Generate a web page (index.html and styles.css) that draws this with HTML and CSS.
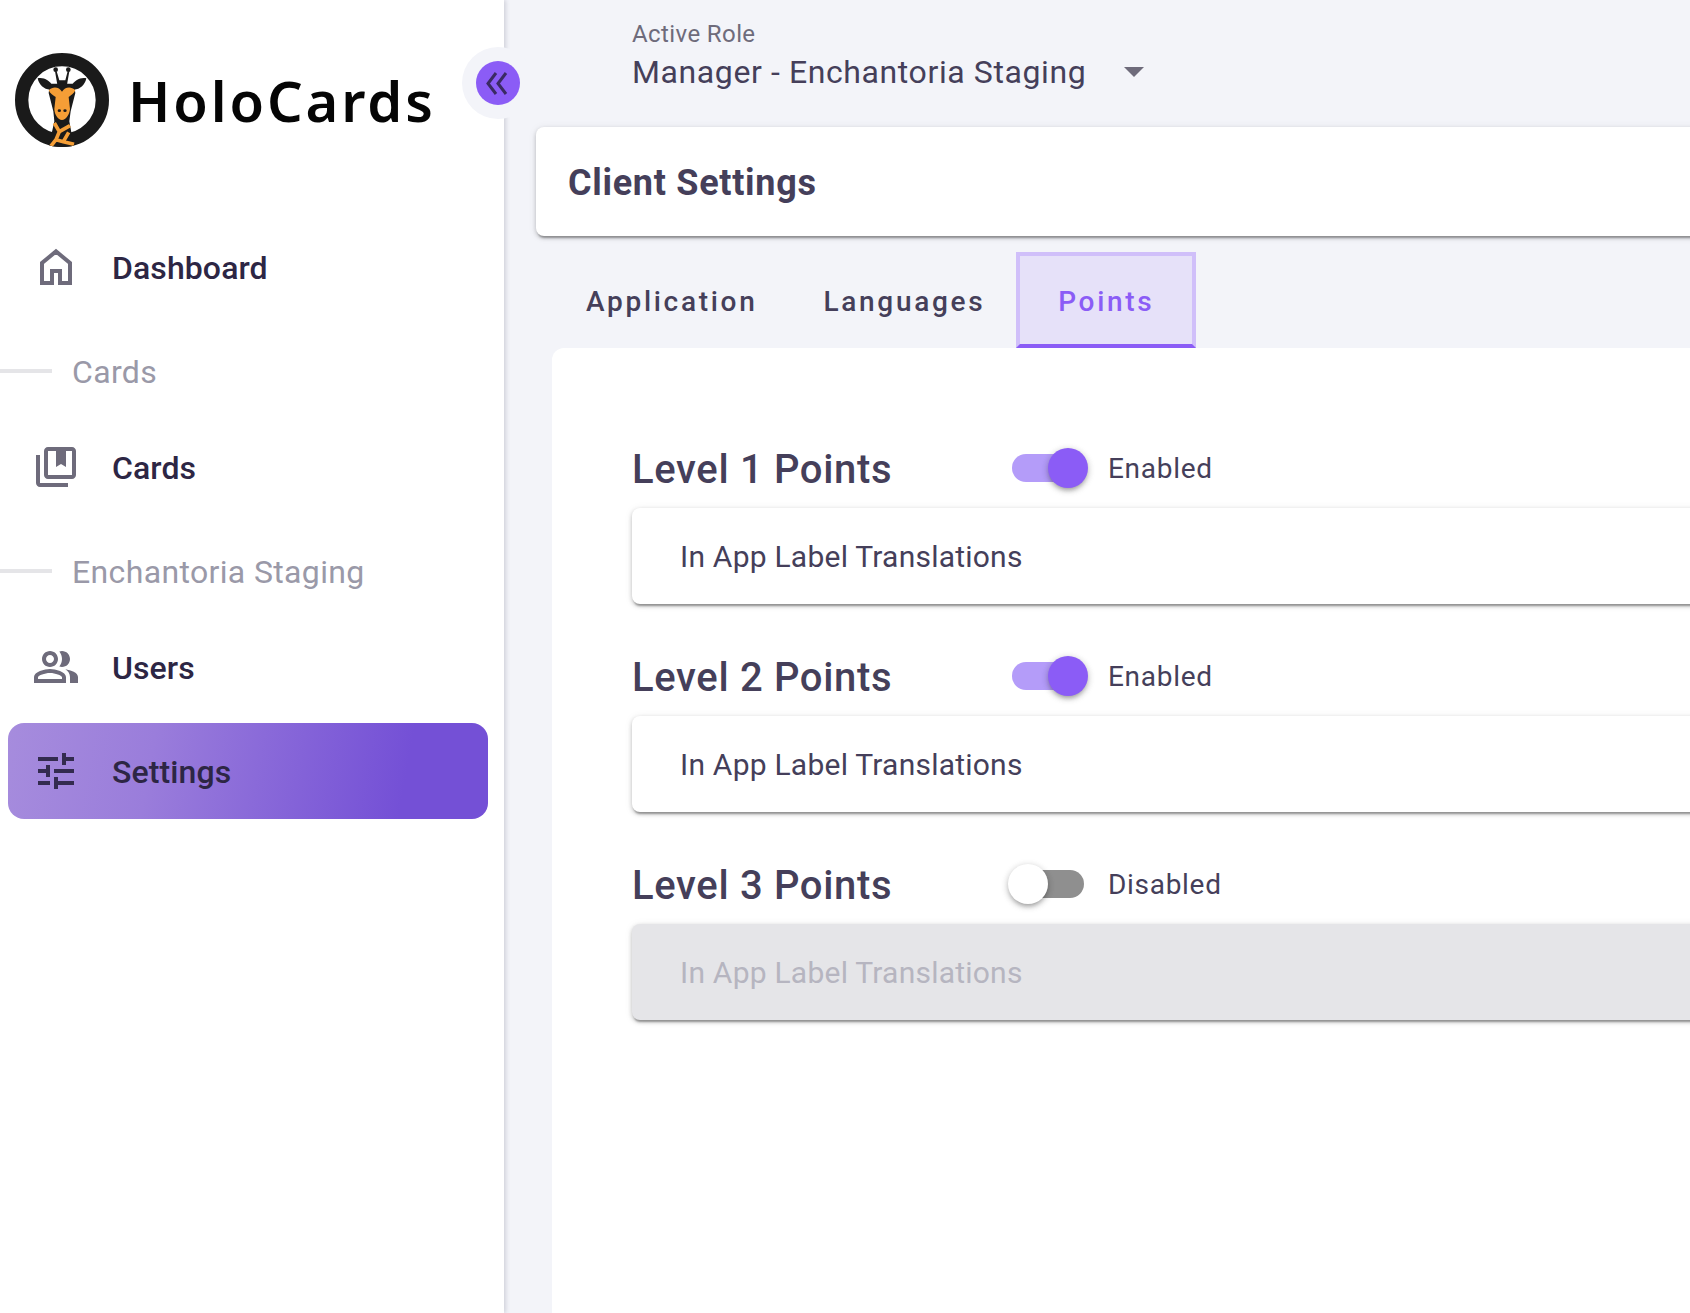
FILE: index.html
```html
<!DOCTYPE html>
<html lang="en">
<head>
<meta charset="utf-8">
<title>HoloCards - Client Settings</title>
<link rel="stylesheet" href="styles.css">
</head>
<body>
<div class="app">
  <aside class="sidebar">
    <div class="brand">
      <svg class="logo" viewBox="45 40 282 282">
        <defs><clipPath id="logoClip"><circle cx="186" cy="181" r="141"/></clipPath></defs>
        <circle cx="186" cy="181" r="121" fill="#fff" stroke="#1a1a1a" stroke-width="40"/>
        <g clip-path="url(#logoClip)">
          <path d="M172 135 L165 95 H170 L178 122 H196 L203 95 H208 L201 135 Z" fill="#1a1a1a"/>
          <circle cx="167" cy="90" r="7" fill="#1a1a1a"/>
          <circle cx="205" cy="90" r="7" fill="#1a1a1a"/>
          <path d="M113 116 C130 112 150 122 158 140 L150 150 C132 150 116 134 113 116 Z" fill="#1a1a1a"/>
          <path d="M259 116 C242 112 222 122 214 140 L222 150 C240 150 256 134 259 116 Z" fill="#1a1a1a"/>
          <path d="M150 132 H222 L226 160 L212 215 L208 245 L222 322 H146 L163 245 L160 215 L146 160 Z" fill="#1a1a1a"/>
          <path d="M146 152 C160 138 178 143 186 156 C194 143 212 138 226 152 C222 162 212 168 206 172 L210 208 C208 226 198 240 186 241 C174 240 164 226 163 208 L167 172 C160 168 150 162 146 152 Z" fill="#f59e36"/>
          <ellipse cx="178" cy="213" rx="5" ry="4" fill="#1a1a1a"/>
          <ellipse cx="195" cy="213" rx="5" ry="4" fill="#1a1a1a"/>
          <path d="M163 250 L178 276 L168 300 L152 320 M178 276 L210 258 M168 300 L190 306 L222 314 M190 306 L206 278" fill="none" stroke="#f59e36" stroke-width="11"/>
        </g>
      </svg>
      <span class="brand-name">HoloCards</span>
    </div>
    <nav class="nav">
      <a class="nav-item">
        <svg class="nav-icon" viewBox="0 0 24 24"><path d="M10 20H5V10L12 4.2 19 10V20H14V14H10Z" fill="none" stroke="currentColor" stroke-width="2"/></svg>
        <span>Dashboard</span>
      </a>
      <div class="nav-section"><span>Cards</span></div>
      <a class="nav-item">
        <svg class="nav-icon" viewBox="0 0 24 24"><path fill="currentColor" d="M4 6H2v14c0 1.1.9 2 2 2h14v-2H4V6zM20 2H8c-1.1 0-2 .9-2 2v12c0 1.1.9 2 2 2h12c1.1 0 2-.9 2-2V4c0-1.1-.9-2-2-2zm0 14H8V4h4v8l2.5-1.5L17 12V4h3v12z"/></svg>
        <span>Cards</span>
      </a>
      <div class="nav-section"><span>Enchantoria Staging</span></div>
      <a class="nav-item">
        <svg class="nav-icon" viewBox="0 0 24 24"><path fill="currentColor" d="M16.67 13.13C18.04 14.06 19 15.32 19 17v3h4v-3c0-2.18-3.57-3.47-6.33-3.87zM15 12c2.21 0 4-1.79 4-4s-1.79-4-4-4c-.47 0-.91.1-1.33.24C14.5 5.27 15 6.58 15 8s-.5 2.73-1.33 3.76c.42.14.86.24 1.33.24zM9 12c2.21 0 4-1.79 4-4s-1.79-4-4-4-4 1.79-4 4 1.79 4 4 4zm0-6c1.1 0 2 .9 2 2s-.9 2-2 2-2-.9-2-2 .9-2 2-2zM9 13c-2.67 0-8 1.34-8 4v3h16v-3c0-2.66-5.33-4-8-4zm6 5H3v-.99C3.2 16.29 6.3 15 9 15s5.8 1.29 6 2z"/></svg>
        <span>Users</span>
      </a>
      <a class="nav-item active">
        <svg class="nav-icon" viewBox="0 0 24 24"><path fill="currentColor" d="M3 17v2h6v-2H3zM3 5v2h10V5H3zm10 16v-2h8v-2h-8v-2h-2v6h2zM7 9v2H3v2h4v2h2V9H7zm14 4v-2H11v2h10zm-6-4h2V7h4V5h-4V3h-2v6z"/></svg>
        <span>Settings</span>
      </a>
    </nav>
    <div class="collapse-halo">
      <button class="collapse-btn" type="button" aria-label="Collapse">
        <svg viewBox="0 0 44 44" width="44" height="44"><path d="M20 12 L12 22.5 L20 33 M30 12 L22 22.5 L30 33" fill="none" stroke="#3a2a63" stroke-width="3"/></svg>
      </button>
    </div>
  </aside>
  <main class="main">
    <div class="role">
      <div class="role-label">Active Role</div>
      <div class="role-select">
        <span>Manager - Enchantoria Staging</span>
        <i class="caret"></i>
      </div>
    </div>
    <header class="title-card"><h1>Client Settings</h1></header>
    <div class="tabs">
      <button class="tab" type="button">Application</button>
      <button class="tab" type="button">Languages</button>
      <button class="tab selected" type="button">Points</button>
    </div>
    <section class="content">
      <div class="level">
        <div class="level-head">
          <h2>Level 1 Points</h2>
          <div class="switch on"><span class="thumb"></span></div>
          <span class="switch-label">Enabled</span>
        </div>
        <div class="field">In App Label Translations</div>
      </div>
      <div class="level">
        <div class="level-head">
          <h2>Level 2 Points</h2>
          <div class="switch on"><span class="thumb"></span></div>
          <span class="switch-label">Enabled</span>
        </div>
        <div class="field">In App Label Translations</div>
      </div>
      <div class="level">
        <div class="level-head">
          <h2>Level 3 Points</h2>
          <div class="switch"><span class="thumb"></span></div>
          <span class="switch-label">Disabled</span>
        </div>
        <div class="field disabled">In App Label Translations</div>
      </div>
    </section>
  </main>
</div>
</body>
</html>
```

FILE: styles.css
```css
* { box-sizing: border-box; }
html, body { margin: 0; height: 100%; }
body { font-family: Roboto, "Liberation Sans", sans-serif; color: #453f5a; background: #f3f4f9; overflow: hidden; }
.app { display: flex; height: 1313px; overflow: hidden; }

.sidebar { position: relative; flex: 0 0 504px; background: #fff; box-shadow: 2px 0 4px rgba(60, 60, 90, .18); z-index: 2; }
.brand { display: flex; align-items: center; height: 94px; margin-top: 53px; padding-left: 15px; gap: 19px; }
.logo { width: 94px; height: 94px; flex: none; }
.brand-name { font-family: "Noto Sans", sans-serif; font-size: 56px; font-weight: 600; letter-spacing: 2.9px; color: #050505; line-height: 1; }

.nav { margin-top: 72px; display: flex; flex-direction: column; }
.nav-item { display: flex; align-items: center; height: 96px; margin: 0 16px 8px 8px; padding-left: 24px; border-radius: 16px; font-size: 32px; font-weight: 500; letter-spacing: .1px; color: #2d2644; }
.nav-item span, .nav-section span { padding-top: 2px; }
.nav-section + .nav-item { margin-bottom: 8px; }
.nav-icon { width: 48px; height: 48px; margin-right: 32px; flex: none; color: #6e6b7b; }
.nav-section { display: flex; align-items: center; height: 96px; font-size: 32px; letter-spacing: .35px; color: #9a99a8; }
.nav-section::before { content: ""; width: 52px; height: 4px; margin-right: 20px; background: #e5e5e8; }
.nav-item.active { background: linear-gradient(100deg, #a68cdd 0%, #9a7ddb 30%, #7450d6 82%); }
.nav-item.active .nav-icon { color: #332b4f; }

.collapse-halo { position: absolute; top: 47px; left: 462px; width: 72px; height: 72px; border-radius: 50%; background: #f3f4f9; display: flex; align-items: center; justify-content: center; }
.collapse-btn { width: 44px; height: 44px; padding: 0; border: 0; border-radius: 50%; background: #8b5cf6; }
.collapse-btn svg { display: block; }

.main { flex: 1; min-width: 0; padding-left: 32px; overflow: hidden; }
.role { height: 127px; padding: 18px 0 0 96px; }
.role-label { font-size: 24px; line-height: 32px; letter-spacing: .4px; color: #6e6b7b; }
.role-select { display: flex; align-items: center; font-size: 32px; line-height: 40px; margin-top: 2px; letter-spacing: .6px; }
.caret { width: 0; height: 0; margin-left: 38px; border-left: 10px solid transparent; border-right: 10px solid transparent; border-top: 10px solid #6e6b7b; }

.title-card { height: 109px; margin-right: -24px; padding-left: 32px; display: flex; align-items: center; background: #fff; border-radius: 8px; box-shadow: 0 4px 2px -2px rgba(0,0,0,.28), 0 2px 4px 0 rgba(0,0,0,.2), 0 1px 8px 0 rgba(0,0,0,.08); }
.title-card h1 { margin: 0; padding-top: 2px; font-size: 36px; font-weight: 700; letter-spacing: .7px; color: #453f5a; }

.tabs { display: flex; height: 96px; margin-top: 16px; padding-left: 17px; }
.tab { height: 96px; padding: 2px 33px 0; border: 0; background: none; font: 500 28px Roboto, sans-serif; letter-spacing: 2.7px; color: #453f5a; }
.tab.selected { width: 180px; margin-left: -2px; color: #8b5cf6; background: #e6e1f9; border: 4px solid #d0bffa; border-bottom: 4px solid #8b5cf6; padding: 2px 0 0; }

.content { height: 965px; margin-left: 16px; margin-right: -24px; padding: 100px 0 0 80px; background: #fff; border-radius: 12px 0 0 0; }
.level { margin-bottom: 52px; }
.level-head { display: flex; align-items: center; height: 40px; margin-bottom: 20px; }
.level-head h2 { width: 376px; margin: 0; padding-top: 2px; font-size: 40px; font-weight: 500; letter-spacing: .66px; color: #453f5a; }
.switch { position: relative; width: 72px; height: 28px; margin-left: 4px; border-radius: 14px; background: #8f8f8f; }
.switch.on { background: #b49cf9; }
.thumb { position: absolute; top: -6px; left: -4px; width: 40px; height: 40px; border-radius: 50%; background: #fff; box-shadow: 0 4px 4px -2px rgba(0,0,0,.2), 0 2px 6px rgba(0,0,0,.16), 0 2px 8px rgba(0,0,0,.12); }
.switch.on .thumb { left: 36px; background: #8b5cf6; }
.switch-label { margin-left: 24px; font-size: 28px; color: #453f5a; letter-spacing: .7px; }
.field { height: 96px; padding-left: 48px; display: flex; align-items: center; font-size: 30px; letter-spacing: .23px; background: #fff; border-radius: 8px; box-shadow: 0 4px 2px -2px rgba(0,0,0,.28), 0 2px 4px 0 rgba(0,0,0,.22), 0 1px 8px 0 rgba(0,0,0,.08); }
.field.disabled { background: #e5e5e8; color: #b6b5c0; }
```
